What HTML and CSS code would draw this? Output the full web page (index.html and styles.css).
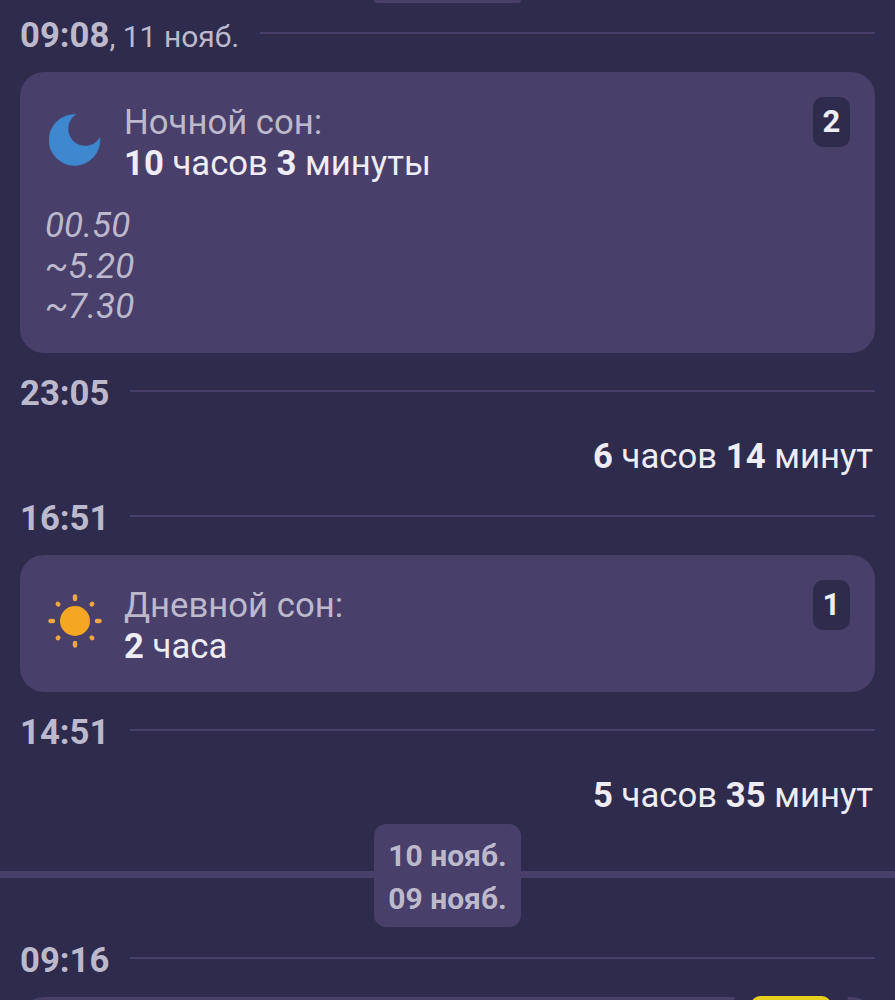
FILE: index.html
```html
<!DOCTYPE html>
<html lang="ru">
<head>
  <meta charset="UTF-8">
  <title>Сон</title>
  <link rel="stylesheet" href="styles.css">
</head>
<body>

  <div class="stub"></div>

  <div class="time-row">
    <span class="time"><b>09:08</b><span class="date">, 11 нояб.</span></span>
    <span class="line"></span>
  </div>

  <div class="card">
    <div class="card-head">
      <svg class="icon moon" width="52" height="52" viewBox="0 0 52 52">
        <path d="M26.500 0.500A25.500 25.500 0 1 0 50.900 24A17.300 17.300 0 1 1 26.500 0.500Z" fill="#3d88ce" stroke="#3d88ce" stroke-width="0.6" stroke-linejoin="round"/>
      </svg>
      <div class="card-text">
        <div class="card-title">Ночной сон:</div>
        <div class="card-value"><b>10</b> часов <b>3</b> минуты</div>
      </div>
      <div class="badge">2</div>
    </div>
    <div class="note">00.50<br>~5.20<br>~7.30</div>
  </div>

  <div class="time-row after-card">
    <span class="time"><b>23:05</b></span>
    <span class="line"></span>
  </div>

  <div class="duration"><b>6</b> часов <b>14</b> минут</div>

  <div class="time-row">
    <span class="time"><b>16:51</b></span>
    <span class="line"></span>
  </div>

  <div class="card">
    <div class="card-head">
      <svg class="icon sun" width="56" height="56" viewBox="0 0 56 56">
        <circle cx="28" cy="28" r="15" fill="#f5a623"/>
        <g stroke="#eda640" stroke-width="4.5" stroke-linecap="round">
          <path d="M28 3.500V6M28 50V52.500M3.500 28H6M50 28H52.500"/>
          <path d="M10.800 10.800L11.300 11.300M45.200 10.800L44.700 11.300M10.800 45.200L11.300 44.700M45.200 45.200L44.700 44.700"/>
        </g>
      </svg>
      <div class="card-text">
        <div class="card-title">Дневной сон:</div>
        <div class="card-value"><b>2</b> часа</div>
      </div>
      <div class="badge">1</div>
    </div>
  </div>

  <div class="time-row after-card">
    <span class="time"><b>14:51</b></span>
    <span class="line"></span>
  </div>

  <div class="duration"><b>5</b> часов <b>35</b> минут</div>

  <div class="day-split">
    <div class="day-pill">10 нояб.<br>09 нояб.</div>
  </div>

  <div class="time-row">
    <span class="time"><b>09:16</b></span>
    <span class="line"></span>
  </div>

  <div class="card last">
    <div class="tag"></div>
  </div>

</body>
</html>
```

FILE: styles.css
```css
html, body {
  height: 1000px;
  overflow: hidden;
}
body {
  margin: 0;
  padding: 0 20px;
  background-color: #2f2b4c;
  font-family: Roboto, sans-serif;
  font-size: 34.7px;
  color: #eeecf4;
}
.stub {
  width: 147px;
  height: 3px;
  margin: 0 auto 9px;
  border-radius: 0 0 8px 8px;
  background-color: #483f6a;
}
.time-row {
  display: flex;
  align-items: center;
  gap: 21px;
  height: 46px;
  color: #bdb9cd;
}
.time-row.after-card {
  margin-top: 17px;
}
.time b {
  font-weight: 700;
}
.date {
  font-size: 30px;
}
.line {
  flex: 1;
  height: 2px;
  margin-top: -4px;
  background-color: #48406a;
}
.card {
  position: relative;
  margin-top: 14px;
  padding: 29px 25px 25px 26px;
  border-radius: 24px;
  background-color: #483f6a;
}
.card-head {
  display: flex;
  align-items: flex-start;
}
.card-text {
  margin-top: 1px;
  margin-left: -1px;
  line-height: 41px;
}
.card-title {
  color: #bdb9cd;
}
.card-value b {
  font-weight: 700;
}
.icon {
  flex: none;
}
.moon {
  margin: 13px 24px 0 3px;
}
.sun {
  margin: 9px 22px 0 1px;
}
.badge {
  width: 37px;
  height: 50px;
  margin: -4px 0 0 auto;
  border-radius: 10px;
  background-color: #2f2b4c;
  font-size: 31px;
  font-weight: 700;
  line-height: 50px;
  text-align: center;
}
.note {
  height: 122px;
  margin-top: 22px;
  margin-left: -1px;
  color: #bdb9cd;
  font-size: 35px;
  font-style: italic;
  line-height: 40.5px;
}
.duration {
  height: 46px;
  margin-top: 17px;
  margin-bottom: 16px;
  padding-right: 2px;
  line-height: 46px;
  text-align: right;
}
.day-split {
  position: relative;
  display: flex;
  justify-content: center;
  margin: -10px -20px 10px;
}
.day-split::before {
  content: "";
  position: absolute;
  left: 0;
  right: 0;
  top: 47px;
  height: 7px;
  background-color: #483f6a;
}
.day-pill {
  position: relative;
  width: 147px;
  height: 103px;
  padding-top: 10px;
  box-sizing: border-box;
  border-radius: 12px;
  background-color: #483f6a;
  color: #bdb9cd;
  font-size: 30px;
  font-weight: 700;
  line-height: 43px;
  text-align: center;
}
.card.last {
  height: 60px;
  padding: 0;
}
.tag {
  position: absolute;
  right: 44px;
  top: -1px;
  width: 80px;
  height: 40px;
  border-radius: 9px;
  background-color: #e8d020;
  box-shadow: 0 0 0 17px #2f2b4c;
}
```
